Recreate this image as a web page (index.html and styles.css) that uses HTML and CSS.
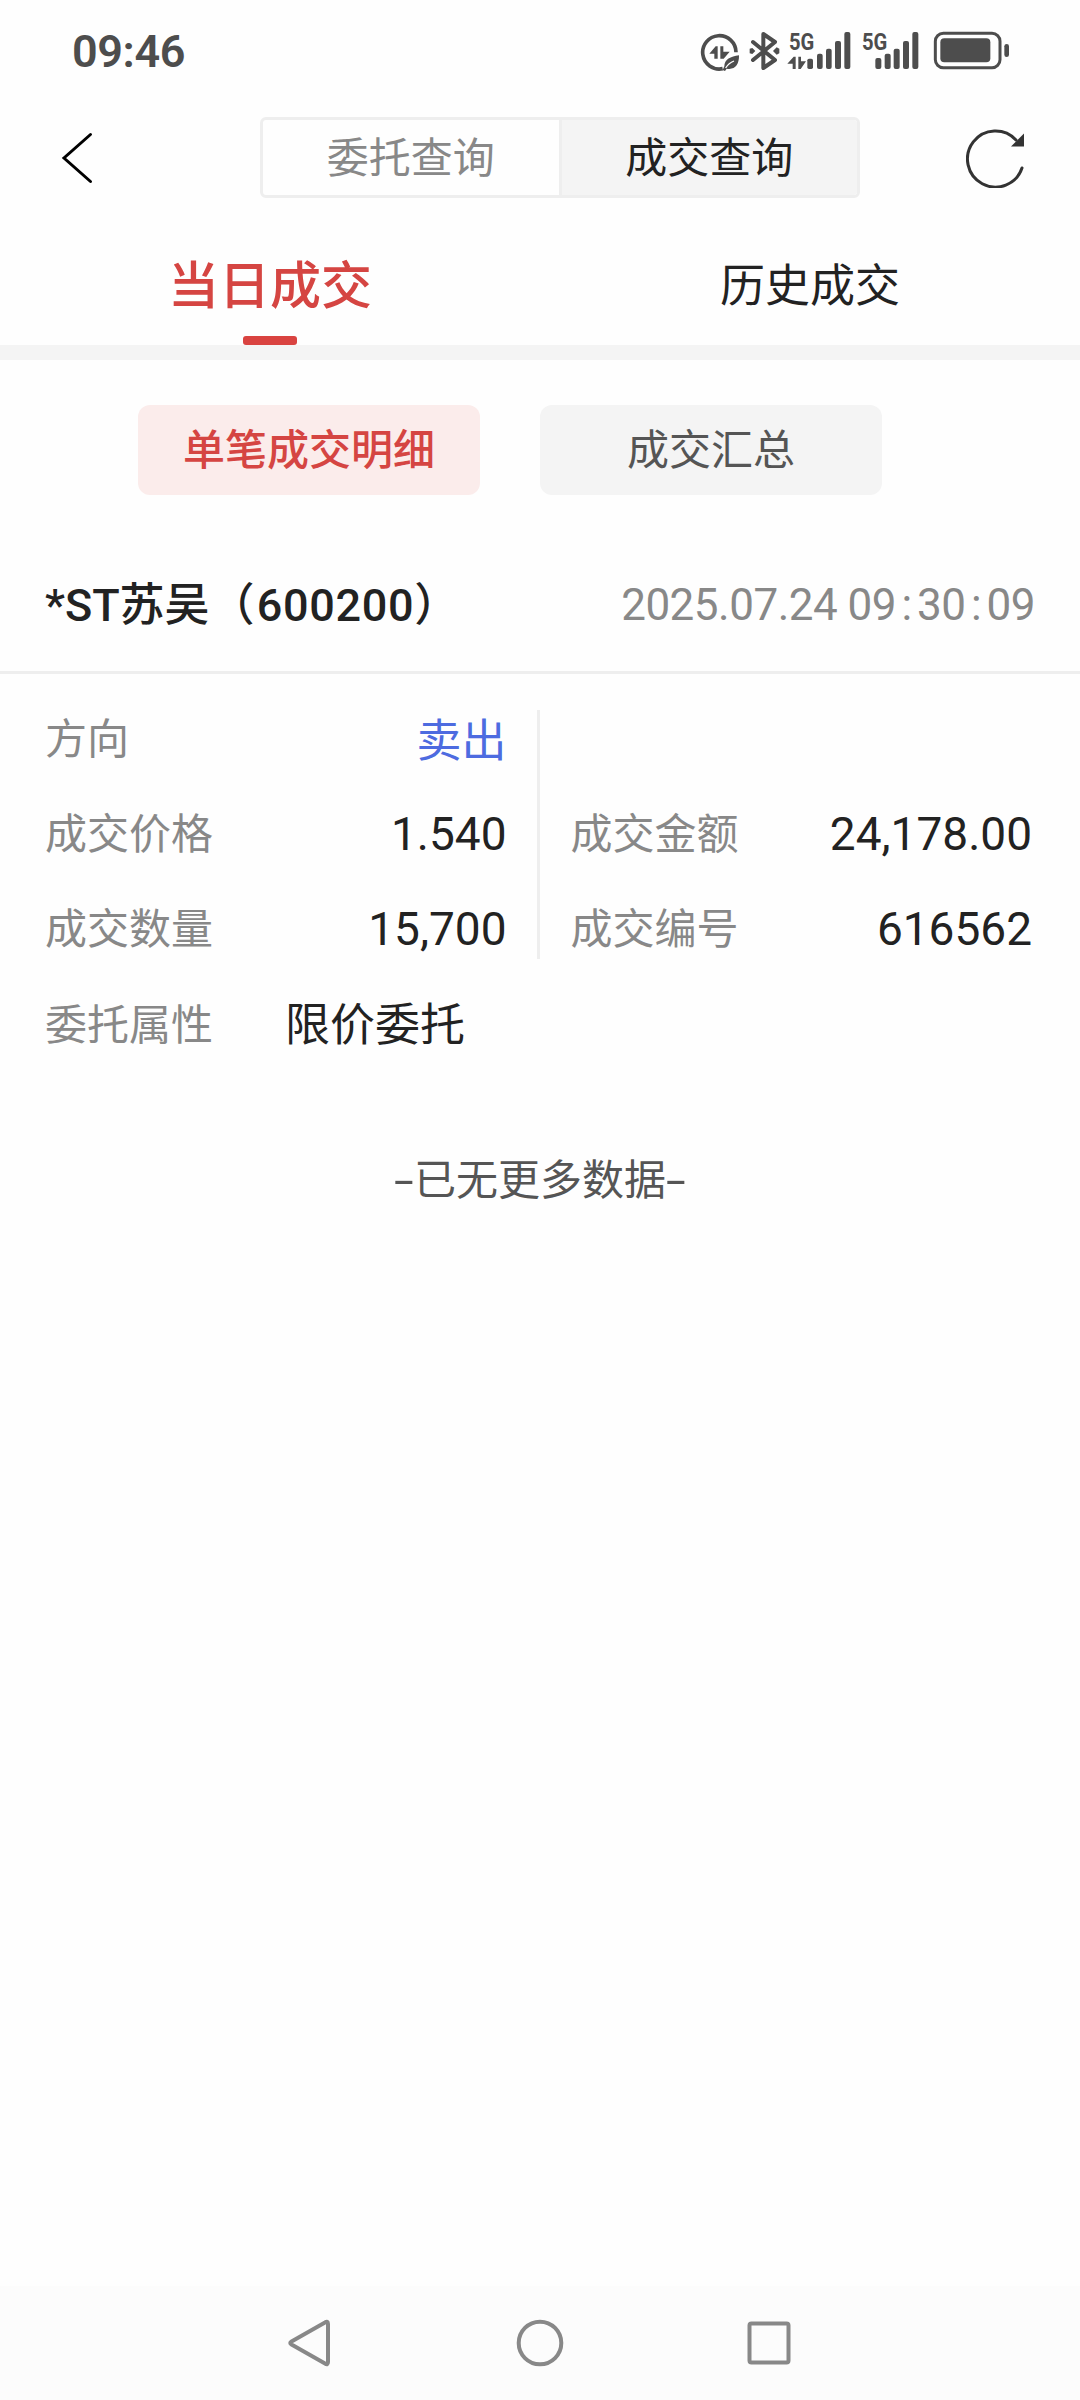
FILE: index.html
```html
<!DOCTYPE html>
<html lang="zh-CN">
<head>
  <meta charset="UTF-8" />
  <meta name="viewport" content="width=device-width, initial-scale=1" />
  <title>成交查询</title>
  <link rel="stylesheet" href="styles.css">
</head>
<body>

<div class="status-bar">
  <div class="clock">09:46</div>
  <div class="status-icons">
    <!-- data saver -->
    <svg class="icon-saver" viewBox="60 27 120 132" width="40" height="44">
      <path d="M128 146 A50 50 0 1 1 168 97" fill="none" stroke="#4d4d4d" stroke-width="11"/>
      <path d="M88 101 L107 79 H113 V116 H103 V101 Z M121 79 H130 V95 H149 L131 116 H121 Z" fill="#4d4d4d"/>
      <path d="M177 106 C152 109 133 119 133 139 L128 150 L135 153 L140 146 C164 151 178 134 177 106 Z" fill="#4d4d4d"/>
      <path d="M137 144 Q146 129 162 123" fill="none" stroke="#fefefe" stroke-width="4"/>
    </svg>
    <!-- bluetooth -->
    <svg class="icon-bt" viewBox="207 27 93 132" width="31" height="44">
      <path d="M219 66 L285 120 L250 144 V42 L285 66 L219 120" fill="none" stroke="#4d4d4d" stroke-width="12" stroke-linejoin="round" stroke-linecap="round"/>
      <path d="M209 86 L217 84 L226 93 L217 102 L209 100 Z M279 93 L290 82 L298 86 V100 L290 104 Z" fill="#4d4d4d"/>
    </svg>
    <!-- sim 1 -->
    <svg class="icon-sim1" viewBox="321 15 195 156" width="65" height="52">
      <text class="net" x="327" y="89" textLength="76" lengthAdjust="spacingAndGlyphs">5G</text>
      <g fill="#4d4d4d">
        <path d="M322 131 L341 110 H347 V147 H338 V131 Z M355 110 H363 V124 H378 L362 147 H355 Z"/>
        <rect x="382" y="116" width="17" height="31" rx="5"/>
        <rect x="411" y="101" width="17" height="46" rx="6"/>
        <rect x="438" y="86" width="17" height="61" rx="6"/>
        <rect x="465" y="63" width="18" height="84" rx="6"/>
        <rect x="493" y="36" width="18" height="111" rx="6"/>
      </g>
    </svg>
    <!-- sim 2 -->
    <svg class="icon-sim2" viewBox="543 15 177 156" width="59" height="52">
      <text class="net" x="546" y="89" textLength="76" lengthAdjust="spacingAndGlyphs">5G</text>
      <g fill="#4d4d4d">
        <rect x="586" y="114" width="18" height="33" rx="6"/>
        <rect x="614" y="101" width="18" height="46" rx="6"/>
        <rect x="641" y="86" width="18" height="61" rx="6"/>
        <rect x="669" y="63" width="18" height="84" rx="6"/>
        <rect x="697" y="36" width="18" height="111" rx="6"/>
      </g>
    </svg>
    <!-- battery -->
    <svg class="icon-battery" viewBox="759 27 231 132" width="77" height="44">
      <rect x="766" y="40" width="194" height="103" rx="24" fill="none" stroke="#4d4d4d" stroke-width="9"/>
      <rect x="781" y="55" width="150" height="72" rx="12" fill="#4d4d4d"/>
      <rect x="973" y="72" width="14" height="39" rx="7" fill="#4d4d4d"/>
    </svg>
  </div>
</div>

<header class="header">
  <svg class="back" viewBox="0 0 34 54" width="34" height="54">
    <path d="M30.500 3.500 L4 27 L30.500 50.500" fill="none" stroke="#000" stroke-width="3" stroke-linecap="round"/>
  </svg>
  <div class="segment">
    <div class="segment-item">委托查询</div>
    <div class="segment-item active">成交查询</div>
  </div>
  <svg class="refresh" viewBox="0 0 60 60" width="60" height="60">
    <path d="M50 12 A28 28 0 1 0 56 40" fill="none" stroke="#333" stroke-width="3" stroke-linecap="round"/>
    <path d="M45 18.500 L58 5.500 V18.500 Z" fill="#333"/>
  </svg>
</header>

<nav class="tabs">
  <div class="tab active">当日成交</div>
  <div class="tab">历史成交</div>
</nav>

<main>
  <div class="chips">
    <div class="chip active">单笔成交明细</div>
    <div class="chip">成交汇总</div>
  </div>

  <section class="deal">
    <div class="deal-head">
      <div class="deal-name">*ST苏吴（<span class="code">600200</span>）</div>
      <div class="deal-time">2025.07.24 09<span class="colon">:</span>30<span class="colon">:</span>09</div>
    </div>
    <div class="deal-body">
      <div class="col">
        <div class="row"><span class="label">方向</span><span class="value sell">卖出</span></div>
        <div class="row"><span class="label">成交价格</span><span class="value">1.540</span></div>
        <div class="row"><span class="label">成交数量</span><span class="value">15,700</span></div>
      </div>
      <div class="divider"></div>
      <div class="col">
        <div class="row"></div>
        <div class="row"><span class="label">成交金额</span><span class="value">24,178.00</span></div>
        <div class="row"><span class="label">成交编号</span><span class="value">616562</span></div>
      </div>
    </div>
    <div class="row attr"><span class="label">委托属性</span><span class="value">限价委托</span></div>
  </section>

  <p class="no-more"><span class="dash">-</span>已无更多数据<span class="dash">-</span></p>
</main>

<footer class="nav-bar">
  <svg viewBox="0 0 50 50" width="50" height="50">
    <path d="M39 4.500 Q42 2.500 42 6 V44 Q42 47.500 39 45.500 L5.500 26.500 Q3 25 5.500 23.500 Z" fill="none" stroke="#888" stroke-width="4" stroke-linejoin="round"/>
  </svg>
  <svg viewBox="0 0 50 50" width="50" height="50">
    <circle cx="25" cy="25" r="21.300" fill="none" stroke="#888" stroke-width="4"/>
  </svg>
  <svg viewBox="0 0 50 50" width="50" height="50">
    <rect x="5.500" y="5.500" width="39" height="39" rx="2" fill="none" stroke="#888" stroke-width="4"/>
  </svg>
</footer>

</body>
</html>
```
FILE: styles.css
```css
* {
  box-sizing: border-box;
}
body {
  margin: 0;
  height: 2400px;
  display: flex;
  flex-direction: column;
  background: #fefefe;
  color: #222;
  font-family: Roboto, "Noto Sans CJK SC", sans-serif;
  font-size: 42px;
}
svg {
  display: block;
}

.status-bar {
  height: 102px;
  padding: 0 70px 0 72px;
  display: flex;
  justify-content: space-between;
  align-items: center;
  color: #4d4d4d;
}
.clock {
  font-size: 45px;
  font-weight: 600;
  letter-spacing: -0.4px;
}
.status-icons {
  display: flex;
  align-items: center;
}
.icon-bt { margin-left: 9px; }
.icon-sim1 { margin-left: 7px; }
.icon-sim2 { margin-left: 9px; }
.icon-battery { margin-left: 13px; }
.net {
  font-size: 73px;
  font-weight: 700;
  fill: #4d4d4d;
}

.header {
  height: 111px;
  padding: 0 54px 0 60px;
  display: flex;
  align-items: center;
}
.segment {
  width: 600px;
  height: 81px;
  margin-left: 166px;
  display: flex;
  border: 3px solid #eee;
  border-radius: 6px;
  overflow: hidden;
}
.segment-item {
  flex: 1;
  line-height: 78px;
  text-align: center;
  color: #888;
}
.segment-item.active {
  background: #f4f4f4;
  border-left: 3px solid #eee;
  color: #222;
}
.refresh {
  margin-left: auto;
}

.tabs {
  height: 147px;
  display: flex;
  border-bottom: 15px solid #f4f4f4;
}
.tab {
  flex: 1;
  display: flex;
  flex-direction: column;
  align-items: center;
  font-size: 45px;
  line-height: 147px;
}
.tab.active {
  padding-top: 12px;
  color: #d54542;
  font-size: 51px;
  font-weight: 500;
  line-height: 123px;
}
.tab.active::after {
  content: "";
  width: 54px;
  height: 9px;
  margin-top: -12px;
  border-radius: 3px;
  background: #d94340;
}

.chips {
  display: flex;
  gap: 60px;
  padding: 45px 138px 0;
}
.chip {
  width: 342px;
  height: 90px;
  border-radius: 12px;
  background: #f4f4f4;
  color: #555;
  line-height: 92px;
  text-align: center;
}
.chip.active {
  background: #fbeceb;
  color: #d54542;
  font-weight: 500;
}

.deal-head {
  height: 179px;
  padding: 42px 45px 0;
  display: flex;
  justify-content: space-between;
  align-items: center;
  border-bottom: 3px solid #eee;
}
.deal-name {
  padding-bottom: 5px;
  font-size: 45px;
  font-weight: 500;
  white-space: nowrap;
}
.code {
  margin-left: 2px;
  letter-spacing: 0.7px;
}
.deal-time {
  padding-top: 2px;
  font-size: 44px;
  letter-spacing: -0.5px;
  color: #888;
}
.colon {
  display: inline-block;
  width: 21px;
  text-align: center;
}
.deal-body {
  display: flex;
  padding: 15px 48px 0 45px;
}
.col {
  flex: 1;
}
.divider {
  width: 3px;
  height: 249px;
  margin: 21px 31px 0 30px;
  background: #eee;
}
.row {
  height: 95px;
  display: flex;
  justify-content: space-between;
  align-items: center;
}
.label {
  padding-bottom: 3px;
  color: #888;
}
.value {
  padding-top: 4px;
  font-size: 46px;
}
.value.sell {
  padding-top: 1px;
  font-size: 45px;
  color: #4d6be0;
}
.attr {
  padding-left: 45px;
  justify-content: flex-start;
  gap: 72px;
}
.attr .label {
  padding-bottom: 0;
}
.attr .value {
  padding-top: 0;
  font-size: 45px;
}

.no-more {
  margin: 77px 0 0;
  text-align: center;
  color: #555;
}
.dash {
  display: inline-block;
  width: 20px;
  transform: scaleX(1.7);
}

.nav-bar {
  height: 114px;
  margin-top: auto;
  padding: 0 286px;
  display: flex;
  justify-content: space-between;
  align-items: center;
  background: #fcfcfc;
}
```
